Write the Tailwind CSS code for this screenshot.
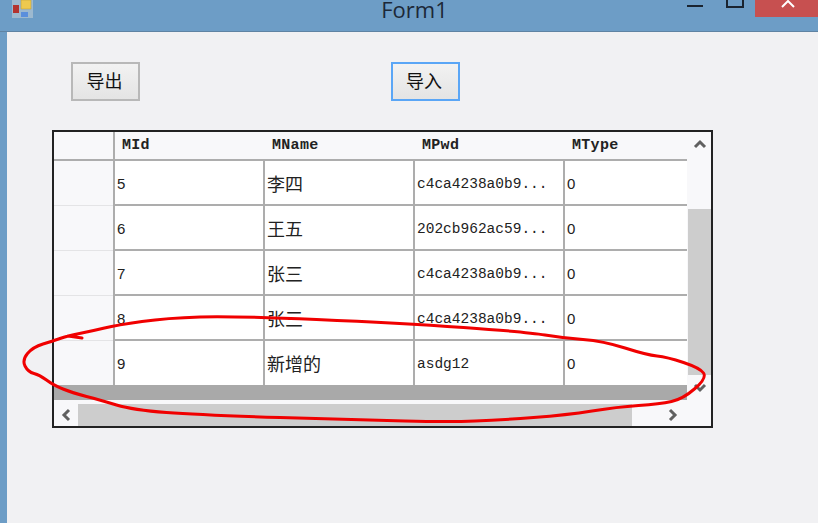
<!DOCTYPE html>
<html lang="en">
<head>
    <meta charset="UTF-8">
    <title>Form1</title>
    <script src="https://cdn.jsdelivr.net/npm/@tailwindcss/browser@4"></script>
</head>
<body class="w-[818px] h-[523px] overflow-hidden bg-[#6d9dc6] font-['Liberation_Sans','Noto_Sans_CJK_SC',sans-serif]">
    <!-- Title bar -->
    <div class="relative h-[32px] flex border-b border-[#5f83a3] overflow-hidden">
        <svg class="absolute left-[12px] top-0" width="21" height="18" viewBox="0 0 21 18">
            <rect width="21" height="18" fill="#9db9cf"/>
            <rect x="1" y="5" width="6" height="8" fill="#b3332f"/>
            <rect x="9" y="0" width="10" height="9" fill="#eec94e" stroke="#b89a35" stroke-width="0.5"/>
            <rect x="9" y="12" width="7" height="5" fill="#5b8fdc"/>
        </svg>
        <div class="w-full text-center pl-[11px] font-['Open_Sans',sans-serif] text-[22px] leading-[18px] text-[#1c2838]">Form1</div>
        <div class="absolute left-[687px] top-[5px] w-[16px] h-[2px] bg-[#1a2430]"></div>
        <div class="absolute left-[726px] top-[-6px] w-[18px] h-[14px] border-2 border-[#1a2430]"></div>
        <div class="absolute left-[755px] top-0 w-[63px] h-[17px] bg-[#c75050]">
            <svg class="absolute left-[26px] top-0" width="14" height="8" viewBox="0 0 14 8"><path d="M1 7 L7 1 L13 7" fill="none" stroke="#fff" stroke-width="2"/></svg>
        </div>
    </div>

    <!-- Form body -->
    <div class="relative ml-[7px] h-[491px] bg-[#f1f1f3]">
        <div class="flex pl-[64px] pt-[30px]">
            <button class="w-[69px] h-[39px] pt-[2px] pr-[2px] border-2 border-[#b8b8b8] bg-linear-to-b from-[#f2f2f2] to-[#e4e4e4] text-[18px] text-[#111]">导出</button>
            <button class="ml-[251px] w-[69px] h-[39px] pt-[2px] pr-[3px] border-2 border-[#5aa6f6] bg-linear-to-b from-[#f2f2f2] to-[#e4e4e4] text-[18px] text-[#111]">导入</button>
        </div>

        <!-- Data grid -->
        <div class="mt-[29px] ml-[45px] w-[661px] h-[298px] border-2 border-[#222] bg-[#f8f8fa] flex flex-col">
            <div class="flex h-[270px]">
                <div class="w-[633px]">
                    <div class="h-[253px] overflow-hidden">
                        <!-- Header -->
                        <div class="grid grid-cols-[61px_150px_150px_150px_122px] h-[29px] border-b-2 border-[#adadad] font-['Liberation_Mono',monospace] text-[15px] font-bold tracking-[0.3px] leading-[27px] text-[#222]">
                            <div class="border-r-2 border-[#adadad]"></div>
                            <div class="pl-[7px]">MId</div>
                            <div class="pl-[7px]">MName</div>
                            <div class="pl-[7px]">MPwd</div>
                            <div class="pl-[7px]">MType</div>
                        </div>
                        <!-- Rows -->
                        <div class="grid grid-cols-[61px_150px_150px_150px_122px] auto-rows-[45px] text-[#222]">
                            <div class="border-r-2 border-[#adadad] relative"><div class="absolute bottom-0 inset-x-0 h-px bg-[#e4e4e6]"></div></div>
                            <div class="bg-white border-r-2 border-b-2 border-[#adadad] pl-[2px] leading-[46px] text-[15px]">5</div>
                            <div class="bg-white border-r-2 border-b-2 border-[#adadad] pl-[2px] leading-[48px] text-[18px]">李四</div>
                            <div class="bg-white border-r-2 border-b-2 border-[#adadad] pl-[2px] leading-[46px] font-['Liberation_Mono',monospace] text-[14.5px] whitespace-nowrap">c4ca4238a0b9...</div>
                            <div class="bg-white border-b-2 border-[#adadad] pl-[2px] leading-[46px] text-[15px]">0</div>

                            <div class="border-r-2 border-[#adadad] relative"><div class="absolute bottom-0 inset-x-0 h-px bg-[#e4e4e6]"></div></div>
                            <div class="bg-white border-r-2 border-b-2 border-[#adadad] pl-[2px] leading-[46px] text-[15px]">6</div>
                            <div class="bg-white border-r-2 border-b-2 border-[#adadad] pl-[2px] leading-[48px] text-[18px]">王五</div>
                            <div class="bg-white border-r-2 border-b-2 border-[#adadad] pl-[2px] leading-[46px] font-['Liberation_Mono',monospace] text-[14.5px] whitespace-nowrap">202cb962ac59...</div>
                            <div class="bg-white border-b-2 border-[#adadad] pl-[2px] leading-[46px] text-[15px]">0</div>

                            <div class="border-r-2 border-[#adadad] relative"><div class="absolute bottom-0 inset-x-0 h-px bg-[#e4e4e6]"></div></div>
                            <div class="bg-white border-r-2 border-b-2 border-[#adadad] pl-[2px] leading-[46px] text-[15px]">7</div>
                            <div class="bg-white border-r-2 border-b-2 border-[#adadad] pl-[2px] leading-[48px] text-[18px]">张三</div>
                            <div class="bg-white border-r-2 border-b-2 border-[#adadad] pl-[2px] leading-[46px] font-['Liberation_Mono',monospace] text-[14.5px] whitespace-nowrap">c4ca4238a0b9...</div>
                            <div class="bg-white border-b-2 border-[#adadad] pl-[2px] leading-[46px] text-[15px]">0</div>

                            <div class="border-r-2 border-[#adadad] relative"><div class="absolute bottom-0 inset-x-0 h-px bg-[#e4e4e6]"></div></div>
                            <div class="bg-white border-r-2 border-b-2 border-[#adadad] pl-[2px] leading-[46px] text-[15px]">8</div>
                            <div class="bg-white border-r-2 border-b-2 border-[#adadad] pl-[2px] leading-[48px] text-[18px]">张三</div>
                            <div class="bg-white border-r-2 border-b-2 border-[#adadad] pl-[2px] leading-[46px] font-['Liberation_Mono',monospace] text-[14.5px] whitespace-nowrap">c4ca4238a0b9...</div>
                            <div class="bg-white border-b-2 border-[#adadad] pl-[2px] leading-[46px] text-[15px]">0</div>

                            <div class="border-r-2 border-[#adadad]"></div>
                            <div class="bg-white border-r-2 border-[#adadad] pl-[2px] leading-[46px] text-[15px]">9</div>
                            <div class="bg-white border-r-2 border-[#adadad] pl-[2px] leading-[48px] text-[18px]">新增的</div>
                            <div class="bg-white border-r-2 border-[#adadad] pl-[2px] leading-[46px] font-['Liberation_Mono',monospace] text-[14.5px]">asdg12</div>
                            <div class="bg-white pl-[2px] leading-[46px] text-[15px]">0</div>
                        </div>
                    </div>
                    <div class="h-[15px] bg-[#a9a9a9]"></div>
                </div>
                <!-- Vertical scrollbar -->
                <div class="w-[23px] ml-auto flex flex-col items-center">
                    <svg class="mt-[7px]" width="14" height="10" viewBox="0 0 14 10"><path d="M2 8 L7 3 L12 8" fill="none" stroke="#606060" stroke-width="3"/></svg>
                    <div class="mt-[60px] w-full h-[166px] bg-[#cdcdcd]"></div>
                    <svg class="mt-[8px]" width="14" height="10" viewBox="0 0 14 10"><path d="M2 2 L7 7 L12 2" fill="none" stroke="#606060" stroke-width="3"/></svg>
                </div>
            </div>
            <!-- Horizontal scrollbar -->
            <div class="mt-[2px] h-[22px] flex items-center">
                <svg class="ml-[6px]" width="12" height="14" viewBox="0 0 12 14"><path d="M9 2 L4 7 L9 12" fill="none" stroke="#606060" stroke-width="3"/></svg>
                <div class="ml-[6px] w-[554px] h-[22px] bg-[#cdcdcd]"></div>
                <svg class="ml-[35px]" width="12" height="14" viewBox="0 0 12 14"><path d="M3 2 L8 7 L3 12" fill="none" stroke="#606060" stroke-width="3"/></svg>
            </div>
        </div>
    </div>

    <!-- Red hand-drawn mark over the grid -->
    <svg class="absolute left-0 top-0 pointer-events-none" width="818" height="523" viewBox="0 0 818 523">
        <path d="M104.5 328 Q92 331 79.5 333.5 Q67 336 60 338.5 Q53 341 43 344 Q33 347 27.5 353.5 Q22 360 25 366 Q28 372 34 373.5 Q40 375 46.5 380 Q53 385 63 389 Q73 393 86.5 396.5 Q100 400 116.5 405 Q133 410 166.5 412.5 Q200 415 280 417.5 Q360 420 405 421 Q450 422 475 421 Q500 420 533.5 417.5 Q567 415 592 411 Q617 407 638.5 405.5 Q660 404 671.5 401.5 Q683 399 695 388.5 Q707 378 703.5 373 Q700 368 683.5 362.5 Q667 357 657 356 Q647 355 625 348 Q603 341 583 339.5 Q563 338 545 335 Q527 332 463.5 327.5 Q400 323 316.5 319.5 Q233 316 200 317 Q167 318 142 321.5 Q117 325 104.5 328 Z M82 338 L68 336" fill="none" stroke="#f00000" stroke-width="3" stroke-linejoin="round" stroke-linecap="round"/>
    </svg>
</body>
</html>
